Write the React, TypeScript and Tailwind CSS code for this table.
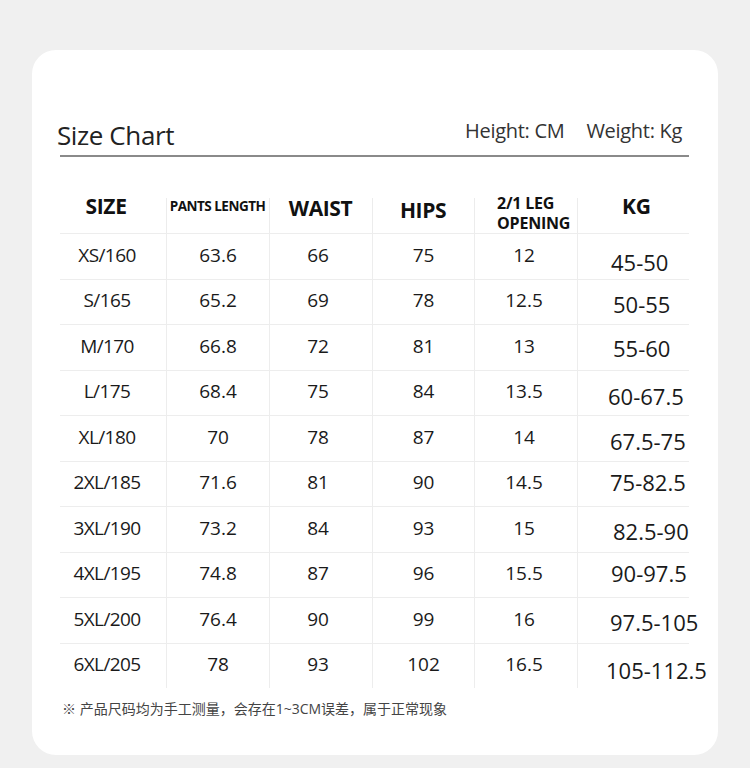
const rows: { cells: string[]; kg: string }[] = [
  { cells: ["XS/160", "63.6", "66", "75", "12", "45-50"], kg: "pt-[12px] pl-[33px]" },
  { cells: ["S/165", "65.2", "69", "78", "12.5", "50-55"], kg: "pt-[4px] pl-[35px]" },
  { cells: ["M/170", "66.8", "72", "81", "13", "55-60"], kg: "pt-[2px] pl-[35px]" },
  { cells: ["L/175", "68.4", "75", "84", "13.5", "60-67.5"], kg: "pt-[6px] pl-[30px]" },
  { cells: ["XL/180", "70", "78", "87", "14", "67.5-75"], kg: "pt-[6px] pl-[32px]" },
  { cells: ["2XL/185", "71.6", "81", "90", "14.5", "75-82.5"], kg: "pb-[4px] pl-[32px]" },
  { cells: ["3XL/190", "73.2", "84", "93", "15", "82.5-90"], kg: "pt-[4px] pl-[35px]" },
  { cells: ["4XL/195", "74.8", "87", "96", "15.5", "90-97.5"], kg: "pb-[4px] pl-[33px]" },
  { cells: ["5XL/200", "76.4", "90", "99", "16", "97.5-105"], kg: "pt-[4px] pl-[32px]" },
  { cells: ["6XL/205", "78", "93", "102", "16.5", "105-112.5"], kg: "pt-[8px] pl-[28px]" },
];

const headLine =
  "bg-[linear-gradient(#ececec,#ececec)] bg-no-repeat bg-[length:1px_35px] bg-left-bottom";

export default function App() {
  return (
    <div className="min-h-[768px] bg-[#f0f0f0] px-[32px] pt-[50px] font-['Open_Sans','Noto_Sans_CJK_SC',sans-serif] text-[#1a1a1a]">
      <div className="h-[705px] rounded-[24px] bg-white pl-[28px] pr-[29px]">
        <div className="flex h-[107px] items-end justify-between border-b-2 border-[#8a8a8a] pb-[7px]">
          <h1 className="-ml-[3px] text-[26px] leading-none tracking-[-0.4px] text-[#222]">
            Size Chart
          </h1>
          <div className="mb-[7px] mr-[7px] flex gap-[22px] text-[20px] leading-none tracking-[-0.3px] text-[#333] font-stretch-[92%]">
            <span>Height: CM</span>
            <span>Weight: Kg</span>
          </div>
        </div>

        <div className="grid grid-cols-[106px_103px_103px_102px_103px_113px] font-bold leading-none text-[#111] font-stretch-[90%]">
          <div className="flex h-[76px] items-center justify-center pb-[6px] pr-[14px] pt-[28px] text-[21px] tracking-[-0.3px]">
            SIZE
          </div>
          <div className={`flex h-[76px] items-center justify-center pb-[4px] pt-[28px] text-[13.5px] tracking-[-0.5px] ${headLine}`}>
            PANTS LENGTH
          </div>
          <div className={`flex h-[76px] items-center justify-center pb-[2px] pt-[28px] text-[21px] tracking-[-0.4px] ${headLine}`}>
            WAIST
          </div>
          <div className={`flex h-[76px] items-center justify-center pt-[30px] text-[21px] tracking-[-0.4px] ${headLine}`}>
            HIPS
          </div>
          <div className={`flex h-[76px] flex-col justify-center pl-[23px] pt-[36px] text-[16px] leading-[20px] tracking-[-0.2px] ${headLine}`}>
            <span>2/1 LEG</span>
            <span>OPENING</span>
          </div>
          <div className={`flex h-[76px] items-center justify-center pb-[6px] pl-[6px] pt-[28px] text-[21px] ${headLine}`}>
            KG
          </div>
        </div>

        <div className="flex flex-col">
          {rows.map((row) => (
            <div
              key={row.cells[0]}
              className="grid h-[45.5px] grid-cols-[106px_103px_103px_102px_103px_113px] border-t border-[#ededed] text-[19px] leading-none"
            >
              <div className="flex items-center justify-center pb-[2px] pr-[12px] tracking-[-0.6px]">{row.cells[0]}</div>
              <div className="flex items-center justify-center border-l border-[#ededed] pb-[2px]">{row.cells[1]}</div>
              <div className="flex items-center justify-center border-l border-[#ededed] pb-[2px] pr-[6px]">{row.cells[2]}</div>
              <div className="flex items-center justify-center border-l border-[#ededed] pb-[2px]">{row.cells[3]}</div>
              <div className="flex items-center justify-center border-l border-[#ededed] pb-[2px] pr-[4px]">{row.cells[4]}</div>
              <div className={`flex items-center whitespace-nowrap border-l border-[#ededed] text-[22px] ${row.kg}`}>
                {row.cells[5]}
              </div>
            </div>
          ))}
        </div>

        <p className="ml-[2px] mt-[11px] text-[14px] leading-[20px] text-[#444]">
          ※ 产品尺码均为手工测量，会存在1~3CM误差，属于正常现象
        </p>
      </div>
    </div>
  );
}
